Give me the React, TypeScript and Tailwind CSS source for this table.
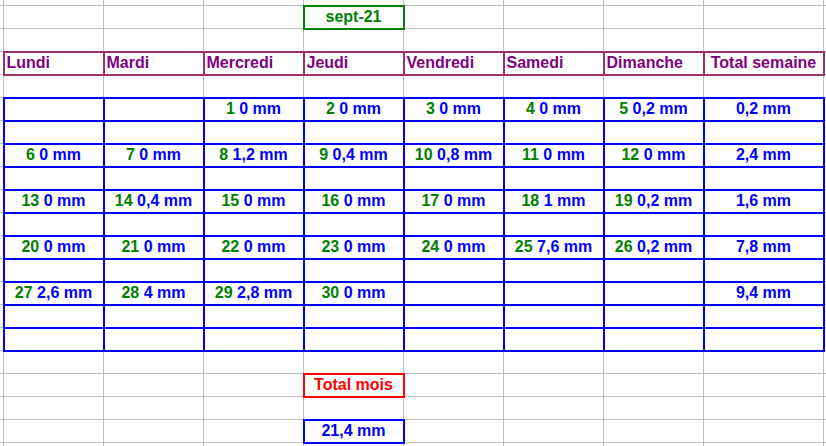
type Day = [number, string] | null;

const weeks: { days: Day[]; total: string }[] = [
  { days: [null, null, [1, '0'], [2, '0'], [3, '0'], [4, '0'], [5, '0,2']], total: '0,2' },
  { days: [[6, '0'], [7, '0'], [8, '1,2'], [9, '0,4'], [10, '0,8'], [11, '0'], [12, '0']], total: '2,4' },
  { days: [[13, '0'], [14, '0,4'], [15, '0'], [16, '0'], [17, '0'], [18, '1'], [19, '0,2']], total: '1,6' },
  { days: [[20, '0'], [21, '0'], [22, '0'], [23, '0'], [24, '0'], [25, '7,6'], [26, '0,2']], total: '7,8' },
  { days: [[27, '2,6'], [28, '4'], [29, '2,8'], [30, '0'], null, null, null], total: '9,4' },
];

const jours = ['Lundi', 'Mardi', 'Mercredi', 'Jeudi', 'Vendredi', 'Samedi', 'Dimanche'];

const grey = 'border border-[#c0c0c0]';
const blue = 'border-2 border-[#0000ff]';
const td = 'p-0 align-middle leading-[18px] whitespace-nowrap overflow-hidden';

// one plain row of empty sheet cells
function EmptyRow({ h = 'h-[23px]' }: { h?: string }) {
  return (
    <tr className={h}>
      {Array.from({ length: 10 }).map((_, i) => (
        <td key={i} className={`${grey} ${td}`} />
      ))}
    </tr>
  );
}

// blank row inside the blue calendar block
function BlueBlankRow() {
  return (
    <tr className="h-[23px]">
      <td className={`${grey} ${td}`} />
      {Array.from({ length: 8 }).map((_, i) => (
        <td key={i} className={`${blue} ${td}`} />
      ))}
      <td className={`${grey} ${td}`} />
    </tr>
  );
}

// a row with a single framed cell in the "Jeudi" column
function SingleCellRow({ border, children }: { border: string; children: React.ReactNode }) {
  return (
    <tr className="h-[23px]">
      {Array.from({ length: 4 }).map((_, i) => (
        <td key={i} className={`${grey} ${td}`} />
      ))}
      <td className={`${border} ${td} text-center`}>{children}</td>
      {Array.from({ length: 5 }).map((_, i) => (
        <td key={i} className={`${grey} ${td}`} />
      ))}
    </tr>
  );
}

export default function App() {
  return (
    <div className="w-[826px] h-[446px] overflow-hidden bg-white font-['Liberation_Sans',Arial,sans-serif] font-bold text-[16px]">
      <table className="border-collapse table-fixed w-[923px] -mt-px -ml-px">
        <colgroup>
          <col className="w-[4px]" />
          {jours.map((j) => (
            <col key={j} className="w-[100px]" />
          ))}
          <col className="w-[120px]" />
          <col className="w-[100px]" />
        </colgroup>
        <tbody>
          <EmptyRow h="h-[6px]" />
          <SingleCellRow border="border-2 border-[#008000]">
            <span className="text-[#008000]">sept-21</span>
          </SingleCellRow>
          <EmptyRow />

          {/* day headers */}
          <tr className="h-[23px]">
            <td className={`${grey} ${td}`} />
            {jours.map((j) => (
              <td key={j} className={`border-2 border-[#993366] ${td} pl-[2px] text-left text-[#800080]`}>
                {j}
              </td>
            ))}
            <td className={`border-2 border-[#993366] ${td} text-center text-[#800080]`}>Total semaine</td>
            <td className={`${grey} ${td}`} />
          </tr>
          <EmptyRow />

          {weeks.map((w, wi) => (
            <>
              <tr key={`w${wi}`} className="h-[23px]">
                <td className={`${grey} ${td}`} />
                {w.days.map((d, i) => (
                  <td key={i} className={`${blue} ${td} text-center`}>
                    {d && (
                      <>
                        <span className="text-[#008000]">{d[0]}</span>{' '}
                        <span className="text-[#0000ff]">{d[1]} mm</span>
                      </>
                    )}
                  </td>
                ))}
                <td className={`${blue} ${td} text-center text-[#0000ff]`}>{w.total} mm</td>
                <td className={`${grey} ${td}`} />
              </tr>
              <BlueBlankRow key={`b${wi}`} />
            </>
          ))}
          <BlueBlankRow />

          <EmptyRow />
          <SingleCellRow border="border-2 border-[#ff0000]">
            <span className="text-[#ff0000]">Total mois</span>
          </SingleCellRow>
          <EmptyRow />
          <SingleCellRow border={blue}>
            <span className="text-[#0000ff]">21,4 mm</span>
          </SingleCellRow>
          <EmptyRow />
        </tbody>
      </table>
    </div>
  );
}
